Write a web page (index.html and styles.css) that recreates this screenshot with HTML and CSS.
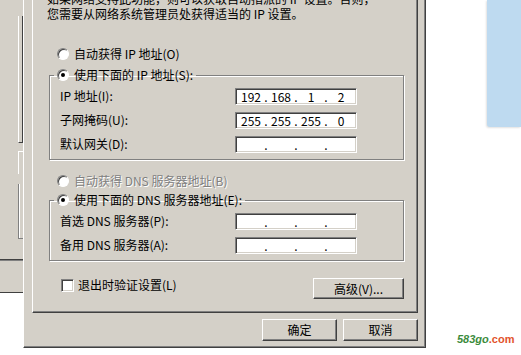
FILE: index.html
```html
<!DOCTYPE html>
<html lang="zh-CN">
<head>
<meta charset="UTF-8">
<meta name="viewport" content="width=device-width, initial-scale=1.0">
<title>Internet 协议 (TCP/IP) 属性</title>
<link rel="stylesheet" href="styles.css">
</head>
<body>
<div class="screen">

<div class="behind">
<div class="behind-list"></div>
<div class="behind-tab"></div>
<div class="behind-frame"></div>
<div class="behind-sep"></div>
</div>

<div class="dialog">
<div class="panel">
<div class="intro">
<p>如果网络支持此功能，则可以获取自动指派的 IP 设置。否则，</p>
<p>您需要从网络系统管理员处获得适当的 IP 设置。</p>
</div>

<div class="option option-ip"><span class="radio"></span>自动获得 IP 地址(O)</div>

<fieldset class="group group-ip">
<legend><span class="radio checked"></span>使用下面的 IP 地址(S):</legend>
<div class="field">
<span class="field-label">IP 地址(I):</span>
<div class="ipbox"><span>192</span><i>.</i><span>168</span><i>.</i><span>1</span><i>.</i><span>2</span></div>
</div>
<div class="field">
<span class="field-label">子网掩码(U):</span>
<div class="ipbox"><span>255</span><i>.</i><span>255</span><i>.</i><span>255</span><i>.</i><span>0</span></div>
</div>
<div class="field">
<span class="field-label">默认网关(D):</span>
<div class="ipbox"><span></span><i>.</i><span></span><i>.</i><span></span><i>.</i><span></span></div>
</div>
</fieldset>

<div class="option option-dns disabled"><span class="radio"></span>自动获得 DNS 服务器地址(B)</div>

<fieldset class="group group-dns">
<legend><span class="radio checked"></span>使用下面的 DNS 服务器地址(E):</legend>
<div class="field">
<span class="field-label">首选 DNS 服务器(P):</span>
<div class="ipbox"><span></span><i>.</i><span></span><i>.</i><span></span><i>.</i><span></span></div>
</div>
<div class="field">
<span class="field-label">备用 DNS 服务器(A):</span>
<div class="ipbox"><span></span><i>.</i><span></span><i>.</i><span></span><i>.</i><span></span></div>
</div>
</fieldset>

<div class="bottom-row">
<div class="check-option"><span class="checkbox"></span>退出时验证设置(L)</div>
<button class="btn btn-advanced">高级(V)...</button>
</div>
</div>

<div class="actions">
<button class="btn btn-main">确定</button>
<button class="btn btn-main">取消</button>
</div>
</div>

<div class="side">
<div class="side-window"></div>
<div class="watermark"><span class="wm-green">583go</span><span class="wm-red">.com</span></div>
</div>

</div>
</body>
</html>
```

FILE: styles.css
```css
body {
  margin: 0;
  padding: 0;
  background: #fff;
  font-family: "Noto Sans CJK SC", "Noto Sans", sans-serif;
  font-size: 12px;
  line-height: 14px;
  color: #000;
  overflow: hidden;
}

.screen {
  width: 521px;
  height: 355px;
  display: flex;
  align-items: flex-start;
  overflow: hidden;
}

/* window in the back, left edge */
.behind {
  width: 23px;
  height: 293px;
  box-sizing: border-box;
  background: #d4d0c8;
  border-bottom: 1px solid #404040;
  display: flex;
  flex-direction: column;
  flex-shrink: 0;
}

.behind-list {
  margin: 16px 0 0 18px;
  height: 126px;
  border-left: 1px solid #fff;
  border-right: 1px solid #404040;
  border-bottom: 1px solid #404040;
}

.behind-tab {
  margin: 8px 0 0 18px;
  height: 22px;
  border-left: 1px solid #fff;
  border-top: 1px solid #fff;
}

.behind-frame {
  margin: 10px 0 0 18px;
  height: 54px;
  border-left: 1px solid #808080;
  border-bottom: 1px solid #808080;
  box-shadow: inset 1px 0 0 #fff;
}

.behind-sep {
  margin-top: 20px;
  height: 0;
  border-top: 1px solid #404040;
  border-bottom: 1px solid #808080;
}

/* the properties dialog */
.dialog {
  width: 403px;
  height: 348px;
  box-sizing: border-box;
  flex-shrink: 0;
  background: #d4d0c8;
  border-left: 1px solid #fff;
  border-right: 1px solid #404040;
  border-bottom: 1px solid #404040;
  box-shadow: inset -1px -1px 0 #808080;
  padding: 0 7px 6px 8px;
  display: flex;
  flex-direction: column;
}

.panel {
  margin-top: -20px;
  width: 386px;
  box-sizing: border-box;
  border: 1px solid #fff;
  border-right-color: #404040;
  border-bottom-color: #404040;
  box-shadow: inset -1px -1px 0 #808080;
  padding: 10px 13px 13px 16px;
}

.intro {
  margin-left: -2px;
  white-space: nowrap;
}

.intro p {
  margin: 0;
  line-height: 15px;
}

.option {
  display: flex;
  align-items: center;
  gap: 5px;
  margin-left: 8px;
  height: 14px;
}

.option-ip {
  margin-top: 26px;
}

.option-dns {
  margin-top: 14px;
}

.disabled {
  color: #808080;
  text-shadow: 1px 1px 0 #fff;
}

.radio {
  width: 12px;
  height: 12px;
  box-sizing: border-box;
  border-radius: 50%;
  background: #fff;
  border: 1px solid;
  border-color: #808080 #fff #fff #808080;
  box-shadow: inset 1px 1px 0 #404040;
  position: relative;
  flex-shrink: 0;
}

.radio.checked::after {
  content: "";
  position: absolute;
  left: 3px;
  top: 3px;
  width: 4px;
  height: 4px;
  border-radius: 50%;
  background: #000;
}

.group {
  margin: 7px 0 0 0;
  width: 355px;
  box-sizing: border-box;
  min-inline-size: 0;
  border: 1px solid #808080;
  box-shadow: 1px 1px 0 #fff, inset 1px 1px 0 #fff;
  padding: 2px 0 3px 4px;
}

.group-dns {
  margin-top: 5px;
}

.group legend {
  display: flex;
  align-items: center;
  gap: 5px;
  padding: 0 3px;
  height: 14px;
}

.field {
  display: flex;
  align-items: center;
  height: 24px;
  margin-left: 6px;
}

.field-label {
  width: 175px;
  flex-shrink: 0;
}

.ipbox {
  width: 122px;
  height: 17px;
  box-sizing: border-box;
  background: #fff;
  border: 1px solid;
  border-color: #808080 #fff #fff #808080;
  box-shadow: inset 1px 1px 0 #404040, inset -1px -1px 0 #d4d0c8;
  display: grid;
  grid-template-columns: 1fr 4px 1fr 4px 1fr 4px 1fr;
  align-items: center;
  padding: 0 2px;
  line-height: 15px;
}

.ipbox span {
  text-align: center;
}

.ipbox i {
  font-style: normal;
  text-align: center;
}

.bottom-row {
  margin-top: 17px;
  width: 355px;
  display: flex;
  justify-content: space-between;
  align-items: flex-start;
}

.check-option {
  display: flex;
  align-items: center;
  gap: 4px;
  margin-left: 12px;
  height: 14px;
}

.checkbox {
  width: 13px;
  height: 13px;
  box-sizing: border-box;
  background: #fff;
  border: 1px solid;
  border-color: #808080 #fff #fff #808080;
  box-shadow: inset 1px 1px 0 #404040, inset -1px -1px 0 #d4d0c8;
}

.btn {
  font-family: inherit;
  font-size: 12px;
  line-height: 14px;
  color: #000;
  background: #d4d0c8;
  border: 1px solid;
  border-color: #fff #404040 #404040 #fff;
  box-shadow: inset -1px -1px 0 #808080;
  padding: 0;
  margin: 0;
  box-sizing: border-box;
}

.btn-advanced {
  width: 91px;
  height: 21px;
}

.actions {
  margin-top: 6px;
  display: flex;
  justify-content: flex-end;
  gap: 6px;
}

.btn-main {
  width: 75px;
  height: 22px;
}

/* right side of the desktop */
.side {
  flex: 1;
  align-self: stretch;
  display: flex;
  flex-direction: column;
}

.side-window {
  align-self: flex-end;
  width: 34px;
  height: 127px;
  background: #bedaf0;
  border-bottom-left-radius: 3px;
  box-shadow: -1px 1px 2px rgba(0, 0, 0, 0.12);
}

.watermark {
  margin: auto 0 9px 31px;
  font-family: "Liberation Sans", Arial, sans-serif;
  font-size: 11px;
  line-height: 13px;
  font-weight: bold;
  font-style: italic;
}

.wm-green {
  color: #3b8b3b;
}

.wm-red {
  color: #e2532d;
  font-style: normal;
}
```
